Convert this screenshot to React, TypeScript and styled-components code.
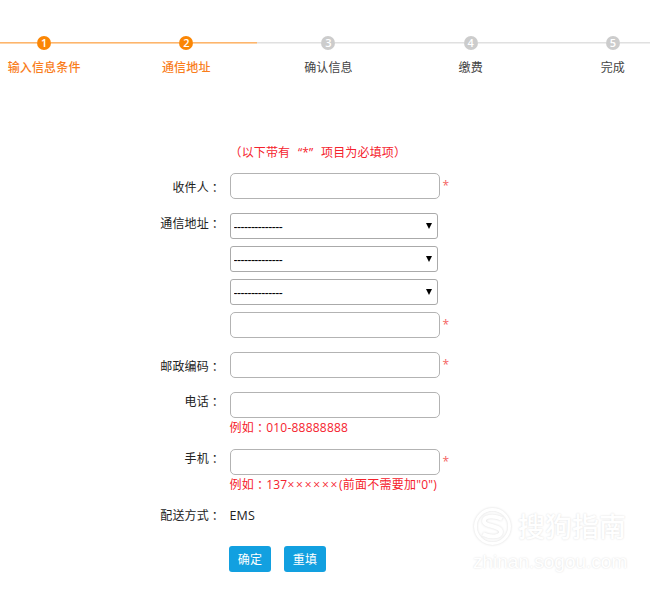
import React from "react";
import styled, { createGlobalStyle } from "styled-components";

const GlobalStyle = createGlobalStyle`
  * { box-sizing: border-box; }
  body {
    margin: 0;
    background: #fff;
    overflow: hidden;
    color: #222;
    font: 12px/18px "Open Sans", "Noto Sans CJK SC", sans-serif;
    letter-spacing: 0.15px;
  }
`;

const Page = styled.main`
  position: relative;
  width: 650px;
  height: 596px;
  overflow: hidden;
`;

const Steps = styled.ol`
  display: grid;
  grid-template-columns: repeat(5, 142.2px);
  width: 711px;
  margin: 0 0 0 -27px;
  padding: 35px 0 0;
  list-style: none;
`;

const Step = styled.li<{ $active: boolean }>`
  display: flex;
  flex-direction: column;
  align-items: center;
  white-space: nowrap;
  color: ${(p) => (p.$active ? "#f97d1c" : "#444")};
  font-weight: ${(p) => (p.$active ? 500 : 400)};
`;

const Track = styled.div<{ $active: boolean }>`
  display: flex;
  align-items: center;
  width: 100%;
  height: 15px;
  margin-bottom: 9px;
  &::before,
  &::after {
    content: "";
    flex: 1;
    height: 2px;
    background: ${(p) => (p.$active
      ? "linear-gradient(#fdb56c 50%, #fed3a6 50%)"
      : "linear-gradient(#e0e0e0 50%, #efefef 50%)")};
  }
`;

const Dot = styled.span<{ $active: boolean }>`
  width: 14px;
  height: 14px;
  border-radius: 50%;
  background: ${(p) => (p.$active ? "#fb8604" : "#ccc")};
  color: #fff;
  font: 600 11px/14px "Open Sans", sans-serif;
  letter-spacing: 0;
  text-align: center;
`;

const Form = styled.form`
  margin: 0;
  padding: 67px 0 0 130.5px;
`;

const Notice = styled.p`
  margin: 0 0 11px 99px;
  height: 18px;
  color: #f5222d;
  white-space: nowrap;
`;

const Quote = styled.span<{ $align: "left" | "right" }>`
  display: inline-block;
  width: 12px;
  text-align: ${(p) => p.$align};
`;

const Row = styled.div<{ $gap: number }>`
  display: grid;
  grid-template-columns: 90.5px 1fr;
  column-gap: 8.5px;
  margin-bottom: ${(p) => p.$gap}px;
`;

const Label = styled.label<{ $top: number }>`
  padding-top: ${(p) => p.$top}px;
  text-align: right;
`;

const Colon = styled.span`
  font-family: "Noto Sans CJK TC", sans-serif;
  line-height: 0;
  vertical-align: -1px;
`;

const Fields = styled.div`
  display: flex;
  flex-direction: column;
  gap: 7px;
`;

const FieldLine = styled.div`
  display: flex;
  height: 26px;
  gap: 3px;
`;

const Input = styled.input`
  width: 210px;
  height: 26px;
  padding: 0 6px;
  border: 1px solid #b3b3b3;
  border-radius: 5px;
  outline: 0;
  font: inherit;
`;

const Star = styled.span`
  padding-top: 4px;
  color: #f4635f;
`;

const SelectBox = styled.div`
  position: relative;
  width: 208px;
  height: 26px;
`;

const Select = styled.select`
  appearance: none;
  display: block;
  width: 208px;
  height: 26px;
  padding: 1px 3px 0;
  border: 1px solid #aaa;
  border-radius: 3px;
  background: #fff;
  color: #000;
  font: 12px "Liberation Sans", sans-serif;
  letter-spacing: -0.52px;
`;

const Caret = styled.svg`
  position: absolute;
  top: 10px;
  right: 6px;
  width: 6px;
  height: 6px;
  pointer-events: none;
`;

const Hint = styled.div`
  height: 18px;
  margin-top: -6px;
  margin-bottom: -1px;
  color: #f5222d;
  letter-spacing: 0.22px;
  white-space: nowrap;
`;

const Mask = styled.span`
  letter-spacing: 1.75px;
`;

const Delivery = styled.span`
  padding-top: 1px;
  font-size: 12.5px;
`;

const Actions = styled.div`
  display: flex;
  gap: 13px;
  padding-left: 98.5px;
`;

const Button = styled.button`
  width: 42px;
  height: 26px;
  padding: 1px 0 0;
  border: 0;
  border-radius: 3px;
  background: #12a0e0;
  color: #fff;
  font: inherit;
  letter-spacing: inherit;
`;

const Watermark = styled.div`
  position: absolute;
  left: 473px;
  top: 507px;
  display: grid;
  grid-template-columns: 39px auto;
  column-gap: 6px;
  color: #fff;
  font-family: "Liberation Sans", "Noto Sans CJK SC", sans-serif;
  text-shadow: 0 0 2px #dadada;
  white-space: nowrap;
`;

const Brand = styled.span`
  font-size: 27px;
  font-weight: 500;
  line-height: 42px;
  letter-spacing: 0;
`;

const Site = styled.span`
  grid-column: 1 / -1;
  font-size: 19px;
  line-height: 26px;
  letter-spacing: 0;
`;

const Logo = styled.svg`
  width: 39px;
  height: 39px;
  filter: drop-shadow(0 0 1px #dadada);
`;

const STEPS = ["输入信息条件", "通信地址", "确认信息", "缴费", "完成"];

function Name({ text, top }: { text: string; top: number }) {
  return (
    <Label $top={top}>
      {text}
      <Colon>：</Colon>
    </Label>
  );
}

function TextField({ required = false }: { required?: boolean }) {
  return (
    <FieldLine>
      <Input />
      {required && <Star>*</Star>}
    </FieldLine>
  );
}

function RegionSelect() {
  return (
    <SelectBox>
      <Select>
        <option>--------------</option>
      </Select>
      <Caret viewBox="0 0 6 6">
        <path d="M0 0h6L3 6z" fill="#000" />
      </Caret>
    </SelectBox>
  );
}

export default function App() {
  return (
    <Page>
      <GlobalStyle />
      <Steps>
        {STEPS.map((step, i) => (
          <Step key={step} $active={i < 2}>
            <Track $active={i < 2}>
              <Dot $active={i < 2}>{i + 1}</Dot>
            </Track>
            {step}
          </Step>
        ))}
      </Steps>
      <Form>
        <Notice>
          （以下带有<Quote $align="right">“</Quote>*<Quote $align="left">”</Quote>项目为必填项）
        </Notice>
        <Row $gap={14}>
          <Name text="收件人" top={6} />
          <TextField required />
        </Row>
        <Row $gap={13.5}>
          <Name text="通信地址" top={2} />
          <Fields>
            <RegionSelect />
            <RegionSelect />
            <RegionSelect />
            <TextField required />
          </Fields>
        </Row>
        <Row $gap={14}>
          <Name text="邮政编码" top={6} />
          <TextField required />
        </Row>
        <Row $gap={13}>
          <Name text="电话" top={1} />
          <Fields>
            <TextField />
            <Hint>例如<Colon>：</Colon>010-88888888</Hint>
          </Fields>
        </Row>
        <Row $gap={13}>
          <Name text="手机" top={1} />
          <Fields>
            <TextField required />
            <Hint>例如<Colon>：</Colon>137<Mask>××××××</Mask>(前面不需要加"0")</Hint>
          </Fields>
        </Row>
        <Row $gap={21.5}>
          <Name text="配送方式" top={1} />
          <Delivery>EMS</Delivery>
        </Row>
        <Actions>
          <Button type="button">确定</Button>
          <Button type="button">重填</Button>
        </Actions>
      </Form>
      <Watermark>
        <Logo viewBox="0 0 39 39" fill="none" stroke="#fff" strokeWidth="3">
          <circle cx="19.5" cy="19.5" r="17" />
          <path d="M29 12C21 8 11 9 11 14C11 20 28 18 28 25C28 30 18 31 10 27" strokeWidth="4" />
        </Logo>
        <Brand>搜狗指南</Brand>
        <Site>zhinan.sogou.com</Site>
      </Watermark>
    </Page>
  );
}
